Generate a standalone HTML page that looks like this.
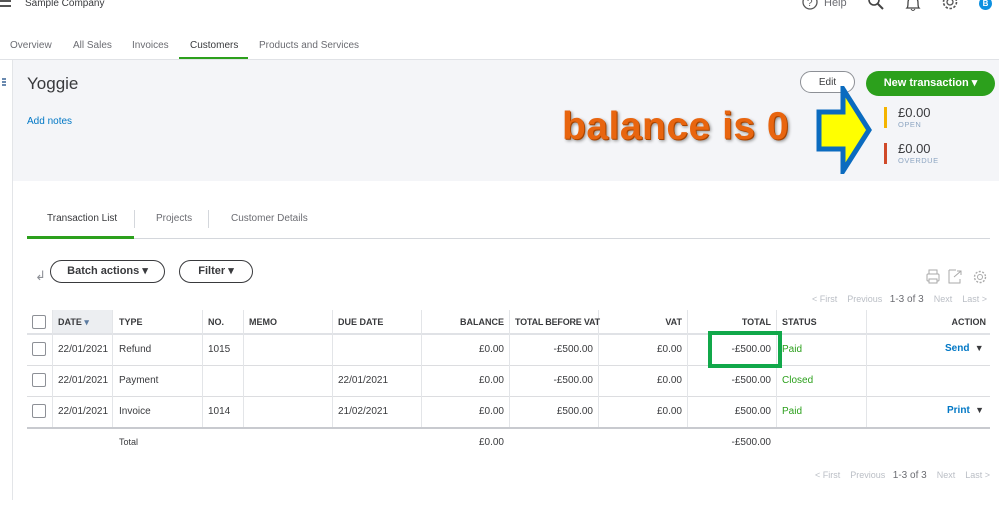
<!DOCTYPE html>
<html><head><meta charset="utf-8"><style>
*{box-sizing:border-box;margin:0;padding:0}
body{width:999px;height:529px;overflow:hidden;background:#fff;font-family:"Liberation Sans",Arial,sans-serif;color:#393a3d;position:relative}
.a{position:absolute;white-space:nowrap}
.t{font-size:10px;color:#393a3d}
.h{font-size:9px;font-weight:bold;color:#393a3d}
.r{text-align:right}
.g{color:#2ca01c}
.cb{width:14px;height:14px;border:1px solid #8d9096;border-radius:2px;background:#fff}
.vl{position:absolute;width:1px;background:#e3e5e8}
.hl{position:absolute;height:1px;background:#dcdde0;left:27px;width:963px}
.pill{position:absolute;border:1.5px solid #393a3d;border-radius:14px;font-size:11px;font-weight:bold;text-align:center;line-height:21px}
.pg{font-size:9px;color:#babec5}
</style></head><body>
<div class="a" style="left:0;top:0;width:11px;height:2px;background:#555"></div>
<div class="a" style="left:0;top:5px;width:11px;height:2px;background:#555"></div>
<div class="a t" style="left:25px;top:-2px;font-size:10px">Sample Company</div>
<svg class="a" style="left:800px;top:-6px" width="20" height="18"><circle cx="10" cy="8" r="7" fill="none" stroke="#555" stroke-width="1.3"/><text x="7" y="12" font-size="10" fill="#555" font-family="Liberation Sans">?</text></svg>
<div class="a" style="left:824px;top:-3px;font-size:11px;color:#6b6c72">Help</div>
<svg class="a" style="left:866px;top:-6px" width="20" height="18"><circle cx="8" cy="6" r="5" fill="none" stroke="#444" stroke-width="1.6"/><line x1="12" y1="10" x2="17" y2="15" stroke="#444" stroke-width="2"/></svg>
<svg class="a" style="left:904px;top:-4px" width="18" height="18"><path d="M3 12 Q4 11 4 7 Q4 1 9 1 Q14 1 14 7 Q14 11 15 12 Z" fill="none" stroke="#444" stroke-width="1.3"/><path d="M7 13 Q9 16 11 13" fill="none" stroke="#444"/></svg>
<svg class="a" style="left:940px;top:-6px" width="20" height="18"><circle cx="10" cy="8" r="3" fill="none" stroke="#555" stroke-width="1.3"/><circle cx="10" cy="8" r="6.5" fill="none" stroke="#555" stroke-width="1.6" stroke-dasharray="2.5 1.6"/></svg>
<div class="a" style="left:979px;top:-3px;width:13px;height:13px;border-radius:50%;background:#0d90e0;color:#fff;font-size:8px;font-weight:bold;text-align:center;line-height:13px">B</div>
<div class="a" style="left:10px;top:40px;font-size:10px;color:#6b6c72">Overview</div>
<div class="a" style="left:73px;top:40px;font-size:10px;color:#6b6c72">All Sales</div>
<div class="a" style="left:132px;top:40px;font-size:10px;color:#6b6c72">Invoices</div>
<div class="a" style="left:190px;top:40px;font-size:10px;color:#393a3d">Customers</div>
<div class="a" style="left:259px;top:40px;font-size:10px;color:#6b6c72">Products and Services</div>
<div class="a" style="left:179px;top:57px;width:69px;height:3px;background:#2ca01c"></div>
<div class="a" style="left:0;top:59px;width:999px;height:1px;background:#e0e2e6"></div>
<div class="a" style="left:12px;top:60px;width:1px;height:440px;background:#e3e5e8"></div>
<div class="a" style="left:2px;top:78px;width:4px;height:2px;background:#6a8ab0;box-shadow:0 3px #6a8ab0,0 6px #6a8ab0"></div>
<div class="a" style="left:13px;top:60px;width:986px;height:121px;background:#f4f5f8"></div>
<div class="a" style="left:27px;top:74px;font-size:17px;color:#393a3d">Yoggie</div>
<div class="a" style="left:27px;top:116px;font-size:10px;color:#0077c5">Add notes</div>
<div class="a" style="left:800px;top:71px;width:55px;height:22px;border:1px solid #8d9096;border-radius:12px;background:#fff;font-size:10px;text-align:center;line-height:22px">Edit</div>
<div class="a" style="left:866px;top:71px;width:129px;height:25px;border-radius:13px;background:#2ca01c;color:#fff;font-size:11px;font-weight:bold;text-align:center;line-height:25px">New transaction &#9662;</div>
<div class="a" style="left:562px;top:105px;font-size:39px;font-weight:bold;color:#e8650f;text-shadow:1px 1px 0 #a84400,2px 2px 3px #888;letter-spacing:0.5px">balance is 0</div>
<svg class="a" style="left:815px;top:86px" width="60" height="88"><polygon points="4,26 28,26 28,3 54,44 28,85 28,63 4,63" fill="#ffff00" stroke="#0b6bbf" stroke-width="5" stroke-linejoin="miter"/></svg>
<div class="a" style="left:884px;top:107px;width:3px;height:21px;background:#f4b400"></div>
<div class="a" style="left:898px;top:105px;font-size:13px">£0.00</div>
<div class="a" style="left:898px;top:120px;font-size:7.5px;color:#8ea6c2;letter-spacing:.5px">OPEN</div>
<div class="a" style="left:884px;top:143px;width:3px;height:21px;background:#d04a2a"></div>
<div class="a" style="left:898px;top:141px;font-size:13px">£0.00</div>
<div class="a" style="left:898px;top:156px;font-size:7.5px;color:#8ea6c2;letter-spacing:.5px">OVERDUE</div>
<div class="a" style="left:47px;top:213px;font-size:10px">Transaction List</div>
<div class="a" style="left:134px;top:210px;width:1px;height:18px;background:#d4d7dc"></div>
<div class="a" style="left:156px;top:213px;font-size:10px;color:#6b6c72">Projects</div>
<div class="a" style="left:208px;top:210px;width:1px;height:18px;background:#d4d7dc"></div>
<div class="a" style="left:231px;top:213px;font-size:10px;color:#6b6c72">Customer Details</div>
<div class="a" style="left:27px;top:238px;width:963px;height:1px;background:#d4d7dc"></div>
<div class="a" style="left:27px;top:236px;width:107px;height:3px;background:#2ca01c"></div>
<div class="a" style="left:35px;top:268px;font-size:13px;color:#8d9096">&#8626;</div>
<div class="pill" style="left:50px;top:260px;width:115px;height:23px">Batch actions &#9662;</div>
<div class="pill" style="left:179px;top:260px;width:74px;height:23px">Filter &#9662;</div>
<svg class="a" style="left:925px;top:268px" width="65" height="18"><rect x="2" y="6" width="12" height="7" rx="1" fill="none" stroke="#aaa"/><rect x="4" y="2" width="8" height="4" fill="none" stroke="#aaa"/><rect x="4" y="11" width="8" height="4" fill="#fff" stroke="#aaa"/><path d="M24 2 h7 M24 2 v13 h11 v-4" fill="none" stroke="#aaa"/><path d="M29 9 L36 3 M32 3 h4 v4" fill="none" stroke="#aaa"/><circle cx="55" cy="9" r="2.5" fill="none" stroke="#aaa"/><circle cx="55" cy="9" r="5.5" fill="none" stroke="#aaa" stroke-width="1.4" stroke-dasharray="2 1.5"/></svg>
<div class="a pg" style="left:812px;top:294px">&lt; First &nbsp;&nbsp; Previous &nbsp; <span style="color:#6b6c72;font-size:10px">1-3 of 3</span> &nbsp;&nbsp; Next &nbsp;&nbsp; Last &gt;</div>
<div class="a" style="left:52px;top:310px;width:60px;height:23px;background:#eceef1"></div>
<div class="hl" style="top:333px;height:2px;background:#e0e2e6"></div>
<div class="hl" style="top:365px"></div>
<div class="hl" style="top:396px"></div>
<div class="hl" style="top:427px;height:2px;background:#c8cacf"></div>
<div class="vl" style="left:52px;top:310px;height:117px"></div>
<div class="vl" style="left:112px;top:310px;height:117px"></div>
<div class="vl" style="left:202px;top:310px;height:117px"></div>
<div class="vl" style="left:243px;top:310px;height:117px"></div>
<div class="vl" style="left:332px;top:310px;height:117px"></div>
<div class="vl" style="left:421px;top:310px;height:117px"></div>
<div class="vl" style="left:509px;top:310px;height:117px"></div>
<div class="vl" style="left:598px;top:310px;height:117px"></div>
<div class="vl" style="left:687px;top:310px;height:117px"></div>
<div class="vl" style="left:776px;top:310px;height:117px"></div>
<div class="vl" style="left:866px;top:310px;height:117px"></div>
<div class="a cb" style="left:32px;top:315px"></div>
<div class="a h" style="left:58px;top:317px">DATE <span style="color:#5b7ba0">&#9662;</span></div>
<div class="a h" style="left:119px;top:317px">TYPE</div>
<div class="a h" style="left:208px;top:317px">NO.</div>
<div class="a h" style="left:249px;top:317px">MEMO</div>
<div class="a h" style="left:338px;top:317px">DUE DATE</div>
<div class="a h r" style="left:421px;top:317px;width:83px">BALANCE</div>
<div class="a h" style="left:515px;top:317px;letter-spacing:-0.2px">TOTAL BEFORE VAT</div>
<div class="a h r" style="left:598px;top:317px;width:84px">VAT</div>
<div class="a h r" style="left:687px;top:317px;width:84px">TOTAL</div>
<div class="a h" style="left:782px;top:317px">STATUS</div>
<div class="a h r" style="left:866px;top:317px;width:120px">ACTION</div>
<div class="a cb" style="left:32px;top:342px"></div>
<div class="a t" style="left:58px;top:344px">22/01/2021</div>
<div class="a t" style="left:119px;top:344px">Refund</div>
<div class="a t" style="left:208px;top:344px">1015</div>
<div class="a t r" style="left:421px;top:344px;width:83px">£0.00</div>
<div class="a t r" style="left:509px;top:344px;width:84px">-£500.00</div>
<div class="a t r" style="left:598px;top:344px;width:84px">£0.00</div>
<div class="a t r" style="left:687px;top:344px;width:84px">-£500.00</div>
<div class="a t g" style="left:782px;top:344px">Paid</div>
<div class="a" style="left:945px;top:343px;font-size:10px;color:#0077c5;font-weight:bold">Send <span style="color:#393a3d;font-size:9px">&nbsp;&#9660;</span></div>
<div class="a" style="left:708px;top:331px;width:74px;height:37px;border:4px solid #11a84a"></div>
<div class="a cb" style="left:32px;top:373px"></div>
<div class="a t" style="left:58px;top:375px">22/01/2021</div>
<div class="a t" style="left:119px;top:375px">Payment</div>
<div class="a t" style="left:338px;top:375px">22/01/2021</div>
<div class="a t r" style="left:421px;top:375px;width:83px">£0.00</div>
<div class="a t r" style="left:509px;top:375px;width:84px">-£500.00</div>
<div class="a t r" style="left:598px;top:375px;width:84px">£0.00</div>
<div class="a t r" style="left:687px;top:375px;width:84px">-£500.00</div>
<div class="a t g" style="left:782px;top:375px">Closed</div>
<div class="a cb" style="left:32px;top:404px"></div>
<div class="a t" style="left:58px;top:406px">22/01/2021</div>
<div class="a t" style="left:119px;top:406px">Invoice</div>
<div class="a t" style="left:208px;top:406px">1014</div>
<div class="a t" style="left:338px;top:406px">21/02/2021</div>
<div class="a t r" style="left:421px;top:406px;width:83px">£0.00</div>
<div class="a t r" style="left:509px;top:406px;width:84px">£500.00</div>
<div class="a t r" style="left:598px;top:406px;width:84px">£0.00</div>
<div class="a t r" style="left:687px;top:406px;width:84px">£500.00</div>
<div class="a t g" style="left:782px;top:406px">Paid</div>
<div class="a" style="left:947px;top:405px;font-size:10px;color:#0077c5;font-weight:bold">Print <span style="color:#393a3d;font-size:9px">&nbsp;&#9660;</span></div>
<div class="a t" style="left:119px;top:437px;font-size:9px">Total</div>
<div class="a t r" style="left:421px;top:437px;width:83px">£0.00</div>
<div class="a t r" style="left:687px;top:437px;width:84px">-£500.00</div>
<div class="a pg" style="left:815px;top:470px">&lt; First &nbsp;&nbsp; Previous &nbsp; <span style="color:#6b6c72;font-size:10px">1-3 of 3</span> &nbsp;&nbsp; Next &nbsp;&nbsp; Last &gt;</div>
</body></html>
